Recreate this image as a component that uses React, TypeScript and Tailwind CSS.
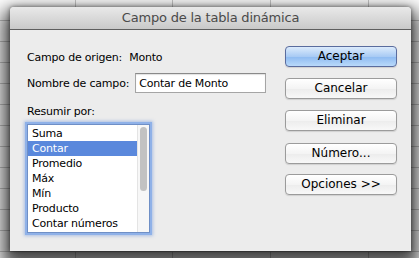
const font = "font-['DejaVu_Sans','Liberation_Sans',sans-serif]";

const options = ['Suma', 'Contar', 'Promedio', 'Máx', 'Mín', 'Producto', 'Contar números'];

const buttons = [
  { label: 'Aceptar', primary: true, mt: 'mt-[16px]' },
  { label: 'Cancelar', mt: 'mt-[11px]' },
  { label: 'Eliminar', mt: 'mt-[11px]' },
  { label: 'Número...', mt: 'mt-[12px]' },
  { label: 'Opciones >>', mt: 'mt-[10px]' },
];

export default function App() {
  return (
    <div
      className={`w-[419px] h-[258px] overflow-hidden bg-white pt-[7px] pl-[10px] ${font} bg-[linear-gradient(90deg,transparent_75px,#c8c8c8_75px,#c8c8c8_76px,transparent_76px,transparent_172px,#c8c8c8_172px,#c8c8c8_173px,transparent_173px,transparent_270px,#c8c8c8_270px,#c8c8c8_271px,transparent_271px,transparent_368px,#c8c8c8_368px,#c8c8c8_369px,transparent_369px),repeating-linear-gradient(180deg,transparent_0px,transparent_20px,#c8c8c8_20px,#c8c8c8_21px)]`}
    >
      <div className="w-[401px] h-[244px] flex flex-col bg-[#ececec] rounded-t-[4px] shadow-[0_10px_18px_8px_rgba(0,0,0,0.7),0_0_4px_rgba(0,0,0,0.5)]">
        {/* Title bar */}
        <div className="h-[23px] shrink-0 rounded-t-[4px] border-b border-[#5e5e5e] bg-[linear-gradient(180deg,#e9e9e9,#c9c9c9)] flex items-center justify-center">
          <span className="text-[13px] leading-[16px] text-[#4a4a4a] tracking-[-0.2px]">
            Campo de la tabla dinámica
          </span>
        </div>

        {/* Body */}
        <div className="flex flex-1 pl-[17px] pr-[14px] text-[11px] leading-[13px] tracking-[-0.2px] text-black">
          <div className="flex flex-col flex-1">
            <div className="mt-[21px] h-[13px] flex">
              <span>Campo de origen:</span>
              <span className="ml-[7px]">Monto</span>
            </div>

            <div className="mt-[9px] flex items-center">
              <span>Nombre de campo:</span>
              <div className="ml-[6px] w-[131px] h-[20px] border border-[#a5a5a5] border-t-[#8a8a8a] bg-white flex items-center pl-[3px] shadow-[inset_0_1px_1px_rgba(0,0,0,0.12)]">
                Contar de Monto
              </div>
            </div>

            <div className="mt-[12px] h-[13px]">Resumir por:</div>

            <div className="mt-[6px] w-[123px] h-[109px] bg-white border border-[#6f8fc6] shadow-[0_0_0_2px_#8fb1e8,0_0_3px_3px_rgba(110,150,220,0.5)] flex">
              <div className="flex-1 pt-[1px]">
                {options.map((o) => (
                  <div
                    key={o}
                    className={`h-[15px] pl-[4px] flex items-center whitespace-nowrap ${
                      o === 'Contar' ? 'bg-[#5a88dc] text-white' : ''
                    }`}
                  >
                    {o}
                  </div>
                ))}
              </div>
              <div className="w-[12px] flex justify-center pt-[2px] bg-[#f7f7f7] border-l border-[#e4e4e4]">
                <div className="w-[7px] h-[64px] rounded-full bg-[#c2c2c2]" />
              </div>
            </div>
          </div>

          <div className="w-[112px] flex flex-col">
            {buttons.map((b) => (
              <div
                key={b.label}
                className={`${b.mt} h-[21px] rounded-[4px] border flex items-center justify-center text-[12px] tracking-normal ${
                  b.primary
                    ? 'border-[#5a6c9e] bg-[linear-gradient(180deg,#dcebfc,#a9cbf4_50%,#8dbaf1_51%,#b9d9fa)] text-black'
                    : 'border-[#9b9b9b] bg-[linear-gradient(180deg,#ffffff,#f4f4f4_50%,#ececec_51%,#f8f8f8)] text-black'
                } shadow-[0_1px_1px_rgba(0,0,0,0.12)]`}
              >
                {b.label}
              </div>
            ))}
          </div>
        </div>
      </div>
    </div>
  );
}
